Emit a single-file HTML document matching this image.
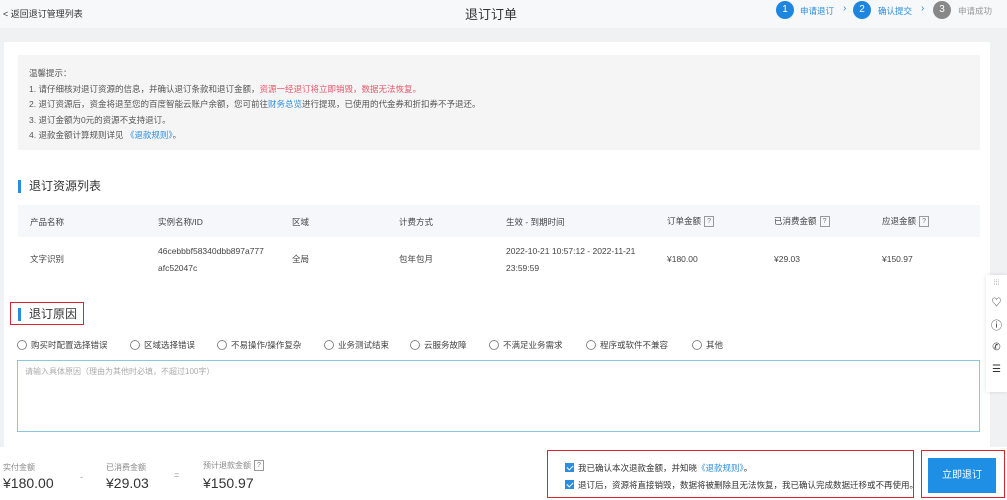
<!DOCTYPE html>
<html><head><meta charset="utf-8"><style>
*{margin:0;padding:0;box-sizing:border-box}
body{width:1007px;height:500px;overflow:hidden;background:#f0f1f3;font-family:"Liberation Sans","Noto Sans CJK SC",sans-serif;color:#333;position:relative;font-size:9px}
.abs{position:absolute}
.top{left:0;top:0;width:1007px;height:28px;background:#f7f8fa}
.card{left:4px;top:42px;width:986px;height:405px;background:#fff}
.notice{left:18px;top:55px;width:962px;height:95px;background:#f5f5f5;padding:11px 11px;line-height:15.5px;color:#555;font-size:8.5px}
.red{color:#e8566a}.blue{color:#2a8ee0}
.sec{font-size:12px;color:#333;padding-left:8px;border-left:3px solid #2a8ee0;line-height:13px}
.th{left:18px;top:205px;width:962px;height:32px;background:#f5f7fa}
.q{display:inline-block;width:10px;height:11px;border:1px solid #999;font-size:7px;line-height:9px;text-align:center;color:#777;margin-left:3px;vertical-align:middle}
.radio{display:inline-block;width:10px;height:10px;border:1px solid #888;border-radius:50%;vertical-align:-2px;margin-right:4px}
.footer{left:0;top:447px;width:1007px;height:53px;background:#fff}
.cb{display:inline-block;width:9px;height:9px;background:#2a8ee0;vertical-align:-1px;margin-right:4px;position:relative}
.cb:after{content:"";position:absolute;left:2.5px;top:0.5px;width:3px;height:5px;border:solid #fff;border-width:0 1.5px 1.5px 0;transform:rotate(45deg)}
.step{position:absolute;top:1px;width:18px;height:18px;border-radius:50%;color:#fff;text-align:center;line-height:18px;font-size:10px}
.sl{position:absolute;top:5px;font-size:8.5px;white-space:nowrap}
</style></head><body>
<div class="abs top"></div>
<div class="abs" style="left:3px;top:7px;font-size:9px;color:#333">&lt; 返回退订管理列表</div>
<div class="abs" style="left:465px;top:4px;font-size:13px;color:#333">退订订单</div>
<span class="step" style="left:776px;background:#1f86e0">1</span><span class="sl" style="left:800px;color:#2a8ee0">申请退订</span><span class="sl" style="left:843px;color:#2a8ee0;font-size:10px;top:3px">›</span>
<span class="step" style="left:853px;background:#1f86e0">2</span><span class="sl" style="left:878px;color:#2a8ee0">确认提交</span><span class="sl" style="left:921px;color:#2a8ee0;font-size:10px;top:3px">›</span>
<span class="step" style="left:933px;background:#888">3</span><span class="sl" style="left:958px;color:#999">申请成功</span>
<div class="abs card"></div>
<div class="abs notice">温馨提示：<br>1. 请仔细核对退订资源的信息，并确认退订条款和退订金额，<span class="red">资源一经退订将立即销毁，数据无法恢复。</span><br>2. 退订资源后，资金将退至您的百度智能云账户余额，您可前往<span class="blue">财务总览</span>进行提现，已使用的代金券和折扣券不予退还。<br>3. 退订金额为0元的资源不支持退订。<br>4. 退款金额计算规则详见 <span class="blue">《退款规则》</span>。</div>
<div class="abs sec" style="left:18px;top:180px">退订资源列表</div>
<div class="abs th"></div>
<div class="abs" style="left:0;top:216px;width:1000px;font-size:8.5px;color:#444">
<span class="abs" style="left:30px">产品名称</span><span class="abs" style="left:158px">实例名称/ID</span><span class="abs" style="left:292px">区域</span><span class="abs" style="left:399px">计费方式</span><span class="abs" style="left:506px">生效 - 到期时间</span><span class="abs" style="left:667px;top:-1px;white-space:nowrap">订单金额<span class="q">?</span></span><span class="abs" style="left:774px;top:-1px;white-space:nowrap">已消费金额<span class="q">?</span></span><span class="abs" style="left:882px;top:-1px;white-space:nowrap">应退金额<span class="q">?</span></span></div>
<div class="abs" style="left:0;top:243px;width:1000px;font-size:8.5px;color:#444;line-height:17px">
<span class="abs" style="left:30px;top:8px">文字识别</span><span class="abs" style="left:158px;top:0">46cebbbf58340dbb897a777<br>afc52047c</span><span class="abs" style="left:292px;top:8px">全局</span><span class="abs" style="left:399px;top:8px">包年包月</span><span class="abs" style="left:506px;top:0;white-space:nowrap">2022-10-21 10:57:12 - 2022-11-21<br>23:59:59</span><span class="abs" style="left:667px;top:8px">¥180.00</span><span class="abs" style="left:774px;top:8px">¥29.03</span><span class="abs" style="left:882px;top:8px">¥150.97</span></div>
<div class="abs" style="left:10px;top:302px;width:74px;height:23px;border:1.5px solid #d9252e"></div>
<div class="abs sec" style="left:18px;top:308px">退订原因</div>
<div class="abs" style="left:17px;top:339px;font-size:8.5px;color:#444;white-space:nowrap">
<span class="abs" style="left:0"><span class="radio"></span>购买时配置选择错误</span><span class="abs" style="left:113px"><span class="radio"></span>区域选择错误</span><span class="abs" style="left:200px"><span class="radio"></span>不易操作/操作复杂</span><span class="abs" style="left:307px"><span class="radio"></span>业务测试结束</span><span class="abs" style="left:393px"><span class="radio"></span>云服务故障</span><span class="abs" style="left:472px"><span class="radio"></span>不满足业务需求</span><span class="abs" style="left:569px"><span class="radio"></span>程序或软件不兼容</span><span class="abs" style="left:675px"><span class="radio"></span>其他</span></div>
<div class="abs" style="left:17px;top:360px;width:963px;height:72px;border:1px solid #8ac8e0;padding:5px 7px;font-size:8px;color:#aaa">请输入具体原因（理由为其他时必填，不超过100字）</div>
<div class="abs" style="left:986px;top:275px;width:21px;height:117px;background:#fff;box-shadow:0 0 4px rgba(0,0,0,.12);font-size:10px;color:#333;text-align:center;line-height:22px">
<div style="font-size:7px;color:#999;line-height:18px">⁞⁞⁞</div><div>♡</div><div style="font-size:11px">ⓘ</div><div>✆</div><div>☰</div></div>
<div class="abs footer"></div>
<div class="abs" style="left:3px;top:462px;font-size:8px;color:#888">实付金额</div>
<div class="abs" style="left:3px;top:475px;font-size:14px;color:#333">¥180.00</div>
<div class="abs" style="left:80px;top:472px;color:#999">-</div>
<div class="abs" style="left:106px;top:462px;font-size:8px;color:#888">已消费金额</div>
<div class="abs" style="left:106px;top:475px;font-size:14px;color:#333">¥29.03</div>
<div class="abs" style="left:174px;top:470px;color:#999">=</div>
<div class="abs" style="left:203px;top:460px;font-size:8px;color:#888">预计退款金额<span class="q">?</span></div>
<div class="abs" style="left:203px;top:475px;font-size:14px;color:#333">¥150.97</div>
<div class="abs" style="left:547px;top:450px;width:367px;height:48px;border:1.5px solid #d9252e"></div>
<div class="abs" style="left:565px;top:462px;font-size:8.5px;color:#333;white-space:nowrap"><span class="cb"></span>我已确认本次退款金额，并知晓<span class="blue">《退款规则》</span>。</div>
<div class="abs" style="left:565px;top:479px;font-size:8.5px;color:#333;white-space:nowrap"><span class="cb"></span>退订后，资源将直接销毁，数据将被删除且无法恢复，我已确认完成数据迁移或不再使用。</div>
<div class="abs" style="left:921px;top:450px;width:84px;height:48px;border:1.5px solid #d9252e"></div>
<div class="abs" style="left:928px;top:458px;width:68px;height:35px;background:#1f8fe6;color:#fff;font-size:10px;text-align:center;line-height:35px">立即退订</div>
</body></html>
